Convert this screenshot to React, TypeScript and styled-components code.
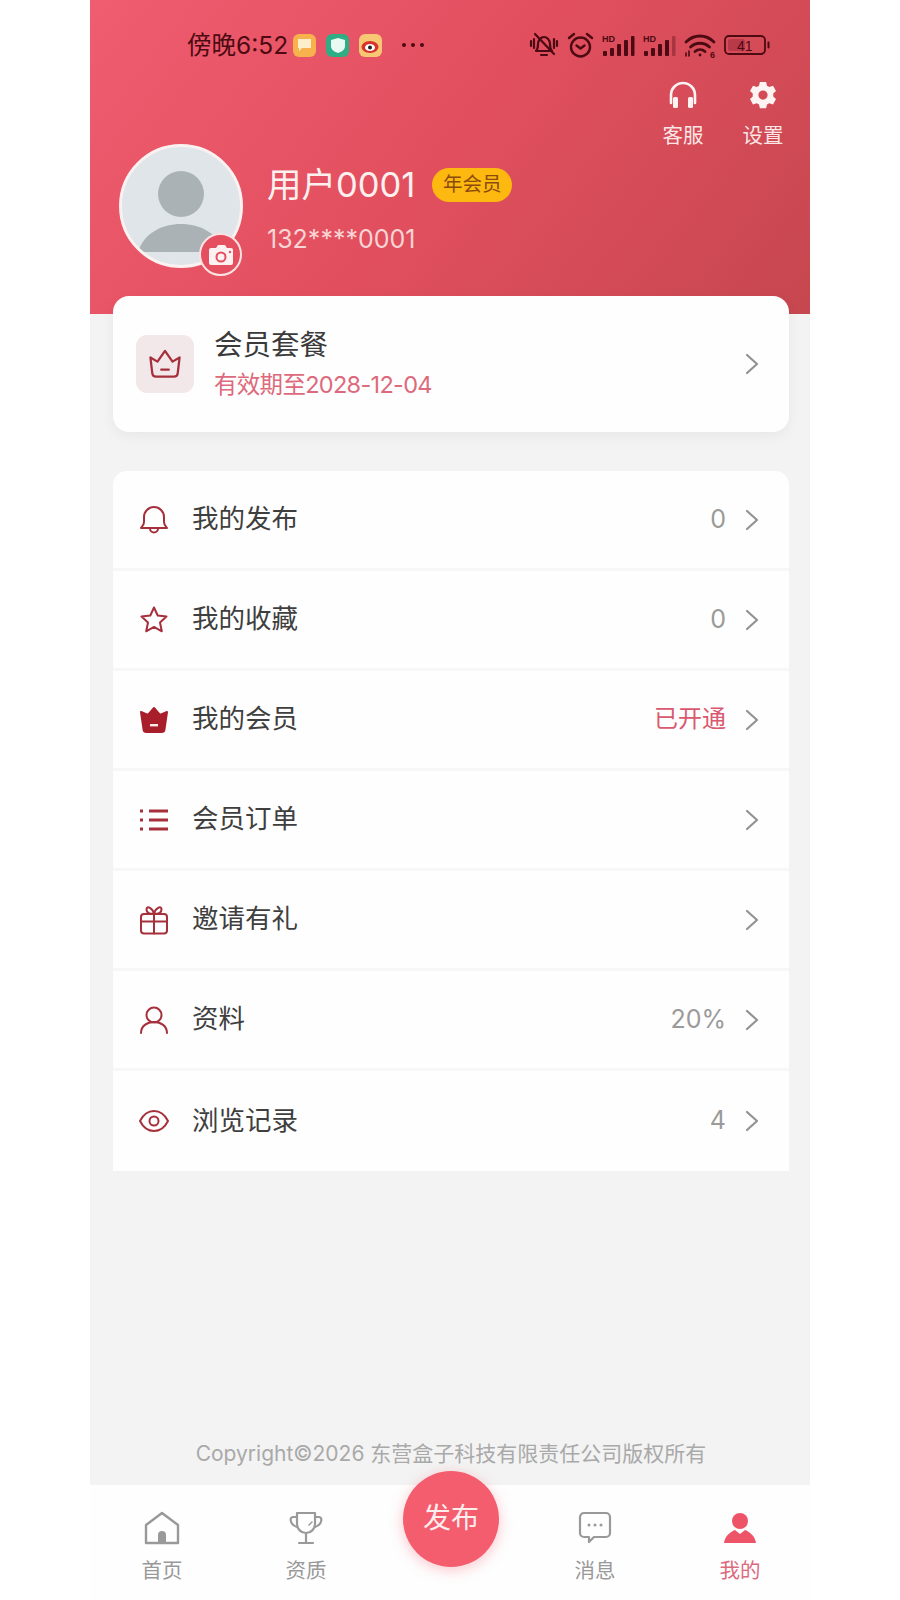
import styled, { createGlobalStyle } from "styled-components";
import { ReactNode } from "react";

const GlobalStyle = createGlobalStyle`
  html, body {
    margin: 0;
    padding: 0;
    background: #fff;
  }
  * {
    box-sizing: border-box;
  }
`;

const Page = styled.div`
  width: 720px;
  height: 1600px;
  margin: 0 auto;
  display: flex;
  flex-direction: column;
  background: #f3f3f3;
  font-family: Inter, "Noto Sans CJK SC", "Noto Sans", sans-serif;
  overflow: hidden;
`;

const Header = styled.header`
  height: 314px;
  flex: none;
  padding: 29px 26px 0 29px;
  background: linear-gradient(128deg, #f05c70 0%, #e14f5e 50%, #c6474f 100%);
`;

const StatusBar = styled.div`
  height: 32px;
  display: flex;
  align-items: center;
  justify-content: space-between;
  padding: 0 14px 0 68px;
`;

const StatusLeft = styled.div`
  display: flex;
  align-items: center;
`;

const Clock = styled.span`
  width: 100px;
  font-size: 24.5px;
  line-height: 32px;
  color: #4c0a12;
  white-space: nowrap;
  margin-right: 6px;
`;

const AppBadge = styled.span<{ $bg: string; $gap?: number }>`
  width: 23px;
  height: 23px;
  border-radius: 6px;
  background: ${(p) => p.$bg};
  margin-right: ${(p) => p.$gap ?? 10}px;
  display: flex;
  align-items: center;
  justify-content: center;
`;

const Dots = styled.span`
  display: flex;
  gap: 5px;
  margin-left: 20px;
  i {
    width: 4px;
    height: 4px;
    border-radius: 50%;
    background: #4c0a12;
  }
`;

const StatusRight = styled.div`
  display: flex;
  align-items: center;
  gap: 8px;
`;

const ToolRow = styled.div`
  display: flex;
  justify-content: flex-end;
  gap: 38px;
  margin-top: 19px;
`;

const Tool = styled.div`
  width: 42px;
  display: flex;
  flex-direction: column;
  align-items: center;
  color: #fbe6e6;
  font-size: 20.5px;
  line-height: 28px;
  gap: 12px;
`;

const ToolIcon = styled.span`
  height: 30px;
  display: flex;
  align-items: center;
  justify-content: center;
`;

const Profile = styled.div`
  display: flex;
  align-items: center;
  margin-top: -6px;
`;

const AvatarWrap = styled.div`
  position: relative;
  width: 124px;
  height: 124px;
  flex: none;
`;

const Avatar = styled.div`
  width: 124px;
  height: 124px;
  border-radius: 50%;
  border: 3px solid #fbf1f1;
  background: #dfe5e8;
  overflow: hidden;
`;

const CameraBadge = styled.div`
  position: absolute;
  right: 1px;
  bottom: -8px;
  width: 43px;
  height: 43px;
  border-radius: 50%;
  border: 2px solid #fbe3e3;
  background: #e4505f;
  display: flex;
  align-items: center;
  justify-content: center;
`;

const ProfileText = styled.div`
  margin-left: 24px;
  padding-top: 7px;
  display: flex;
  flex-direction: column;
  gap: 13px;
`;

const NameRow = styled.div`
  display: flex;
  align-items: center;
  gap: 17px;
`;

const Name = styled.span`
  font-size: 34.5px;
  line-height: 46px;
  color: #fdf1f0;
`;

const VipTag = styled.span`
  width: 80px;
  height: 34px;
  border-radius: 17px;
  background: #fdb90f;
  color: #8a4a10;
  font-size: 19.5px;
  line-height: 33px;
  text-align: center;
`;

const Phone = styled.span`
  font-size: 25px;
  line-height: 36px;
  color: #f9d5d5;
`;

const Content = styled.main`
  flex: 1;
  display: flex;
  flex-direction: column;
  padding: 0 21px 0 23px;
`;

const PlanCard = styled.div`
  height: 136px;
  margin-top: -18px;
  padding: 0 30px 0 23px;
  display: flex;
  align-items: center;
  background: #fefefe;
  border-radius: 16px;
  box-shadow: 0 4px 14px rgba(0, 0, 0, 0.05);
`;

const PlanIcon = styled.div`
  width: 58px;
  height: 58px;
  border-radius: 11px;
  background: #f3e8e9;
  display: flex;
  align-items: center;
  justify-content: center;
  flex: none;
`;

const PlanText = styled.div`
  margin-left: 20px;
  flex: 1;
  display: flex;
  flex-direction: column;
  gap: 3px;
  padding-bottom: 2px;
`;

const PlanTitle = styled.div`
  font-size: 28.5px;
  line-height: 40px;
  color: #3a3a3a;
`;

const PlanExpiry = styled.div`
  font-size: 23.5px;
  line-height: 34px;
  letter-spacing: -0.7px;
  color: #dd6a7c;
`;

const Menu = styled.section`
  margin-top: 39px;
  border-radius: 14px 14px 0 0;
  overflow: hidden;
  display: flex;
  flex-direction: column;
`;

const Row = styled.div`
  height: 100px;
  padding: 0 30px 0 25px;
  display: flex;
  align-items: center;
  background: #fefefe;
  border-bottom: 3px solid #f7f7f7;
  &:last-child {
    border-bottom: none;
  }
`;

const RowIcon = styled.span`
  width: 32px;
  height: 32px;
  flex: none;
  display: flex;
  align-items: center;
  justify-content: center;
`;

const RowLabel = styled.span`
  margin-left: 22px;
  flex: 1;
  font-size: 26.5px;
  line-height: 36px;
  padding-bottom: 3px;
  color: #3f3f3f;
`;

const RowValue = styled.span<{ $accent?: boolean }>`
  margin-right: 19px;
  font-size: ${(p) => (p.$accent ? 24 : 25)}px;
  line-height: 36px;
  padding-bottom: 2px;
  color: ${(p) => (p.$accent ? "#d9596f" : "#9a9a9a")};
`;

const Copyright = styled.div`
  margin-top: auto;
  text-align: center;
  font-size: 21px;
  line-height: 28px;
  color: #a9a9a9;
  padding-bottom: 17px;
`;

const Nav = styled.nav`
  position: relative;
  height: 115px;
  flex: none;
  display: grid;
  grid-template-columns: 144px 144px 142px 150px 140px;
  background: #fefefe;
`;

const NavItem = styled.div<{ $active?: boolean }>`
  display: flex;
  flex-direction: column;
  align-items: center;
  padding-top: 25px;
  gap: 11px;
  font-size: 20.5px;
  line-height: 28px;
  color: ${(p) => (p.$active ? "#dc6a7e" : "#999")};
`;

const NavIcon = styled.span`
  width: 36px;
  height: 36px;
  display: flex;
  align-items: center;
  justify-content: center;
`;

const Fab = styled.div`
  position: absolute;
  left: 313px;
  top: -14px;
  width: 96px;
  height: 96px;
  border-radius: 50%;
  background: #f45d6e;
  color: #fdeeee;
  font-size: 28px;
  line-height: 94px;
  text-align: center;
  box-shadow: 0 3px 14px rgba(244, 93, 110, 0.35);
`;

const DARK = "#4c0a12";
const MAROON = "#a5303c";

const Chevron = () => (
  <svg width="14" height="22" viewBox="0 0 14 22" fill="none">
    <path d="M2 2l10 9-10 9" stroke="#929292" strokeWidth="2.2" strokeLinecap="round" strokeLinejoin="round" />
  </svg>
);

const MuteIcon = () => (
  <svg width="30" height="26" viewBox="0 0 30 26" fill="none" stroke={DARK} strokeWidth="2.2" strokeLinecap="round" strokeLinejoin="round">
    <path d="M7 19c2-2 2-4 2-7 0-4 3-7 6-7s6 3 6 7c0 3 0 5 2 7z" />
    <path d="M6 2l19 20" />
    <path d="M12 23h6M2 9v5M5 7v9M28 9v5M25 7v9" />
  </svg>
);

const AlarmIcon = () => (
  <svg width="27" height="26" viewBox="0 0 27 26" fill="none" stroke={DARK} strokeWidth="2.4" strokeLinecap="round" strokeLinejoin="round">
    <circle cx="13.5" cy="15" r="9.5" />
    <path d="M9.5 13.5l4 3 4-3M2 6l5-4M25 6l-5-4" />
  </svg>
);

const SignalIcon = ({ weak }: { weak?: boolean }) => (
  <svg width="33" height="23" viewBox="0 0 33 23" fill={DARK}>
    <text x="0" y="8" fontSize="9" fontWeight="700" fontFamily="Liberation Sans, sans-serif">HD</text>
    <rect x="1" y="17" width="4" height="5" rx="1" />
    <rect x="8" y="14" width="4" height="8" rx="1" />
    <rect x="15" y="10" width="4" height="12" rx="1" />
    <rect x="22" y="6" width="4" height="16" rx="1" />
    <rect x="29" y="2" width="3.5" height="20" rx="1" opacity={weak ? 0.35 : 1} />
  </svg>
);

const WifiIcon = () => (
  <svg width="32" height="25" viewBox="0 0 32 25" fill="none" stroke={DARK} strokeWidth="2.8" strokeLinecap="round">
    <path d="M2 9c8-8 20-8 28 0M6.5 14c5.500-5 13.500-5 19 0M11 18.500c3-2.500 7-2.500 10 0" />
    <circle cx="16" cy="22" r="1.400" fill={DARK} stroke="none" />
    <text x="26" y="24.500" fontSize="9" fontWeight="700" fill={DARK} stroke="none" fontFamily="Liberation Sans, sans-serif">6</text>
    <path d="M2 20v3M5 18v5" strokeWidth="1.600" />
  </svg>
);

const BatteryIcon = () => (
  <svg width="46" height="20" viewBox="0 0 46 20" fill="none">
    <rect x="1" y="1" width="40" height="18" rx="4" stroke={DARK} strokeWidth="1.800" />
    <rect x="4" y="4" width="17" height="12" rx="2" fill="#b8394a" />
    <text x="13" y="15.500" fontSize="14" fill={DARK} fontFamily="Liberation Sans, sans-serif">41</text>
    <rect x="43.500" y="6.500" width="2" height="7" rx="1" fill={DARK} />
  </svg>
);

const Headset = () => (
  <svg width="30" height="28" viewBox="0 0 30 28" fill="none">
    <path d="M3 22V14a12 12 0 0124 0v8" stroke="#fdf3f3" strokeWidth="2.600" strokeLinecap="round" />
    <rect x="5" y="16" width="5" height="11" rx="1.500" fill="#fdf3f3" />
    <rect x="20" y="16" width="5" height="11" rx="1.500" fill="#fdf3f3" />
  </svg>
);

const Gear = () => (
  <svg width="30" height="30" viewBox="0 0 24 24">
    <path
      fill="#fdf3f3"
      fillRule="evenodd"
      d="M9.500 1.500h5l.7 3 1.800 1 3-1 2.400 4.300-2.200 2v2.400l2.200 2-2.400 4.300-3-1-1.800 1-.7 3h-5l-.7-3-1.800-1-3 1-2.400-4.300 2.200-2v-2.400l-2.200-2 2.400-4.300 3 1 1.800-1zM12 8.300a3.700 3.700 0 100 7.400 3.700 3.700 0 000-7.400z"
    />
  </svg>
);

const AvatarArt = () => (
  <svg width="118" height="118" viewBox="0 0 118 118">
    <circle cx="59" cy="47" r="23" fill="#abb2b5" />
    <path d="M16 105c6-19 24-28 43-28s37 9 43 28z" fill="#abb2b5" />
  </svg>
);

const Camera = () => (
  <svg width="26" height="22" viewBox="0 0 26 22">
    <path
      fill="#fdf1f1"
      fillRule="evenodd"
      d="M3 4h5l2-3h7l2 3h4a2 2 0 012 2v13a2 2 0 01-2 2H3a2 2 0 01-2-2V6a2 2 0 012-2zm10 3.500a5.500 5.500 0 100 11 5.500 5.500 0 000-11zm0 2a3.500 3.500 0 110 7 3.500 3.500 0 010-7z"
    />
    <circle cx="22" cy="8" r="1.200" fill="#e4505f" />
  </svg>
);

const CrownOutline = ({ size, color }: { size: number; color: string }) => (
  <svg width={size} height={size} viewBox="0 0 34 32" fill="none" stroke={color} strokeWidth="2.400" strokeLinejoin="round" strokeLinecap="round">
    <path d="M1.500 9l7.500 4.500L17 2l8 11.500L32.500 9l-2 17a4 4 0 01-4 3.500h-19a4 4 0 01-4-3.500z" />
    <path d="M13 22h8" />
  </svg>
);

const CrownSolid = () => (
  <svg width="30" height="28" viewBox="0 0 30 28">
    <path
      fill="#a81f2b"
      stroke="#a81f2b"
      strokeWidth="2"
      strokeLinejoin="round"
      d="M15 2l6 7 7-3-2.500 17a3 3 0 01-3 3h-15a3 3 0 01-3-3L2 6l7 3z"
    />
    <rect x="11" y="18" width="8" height="2.400" fill="#fbe8e8" />
  </svg>
);

const IconSvg = ({ children, w = 30, h = 30, vb = "0 0 30 30" }: { children: ReactNode; w?: number; h?: number; vb?: string }) => (
  <svg width={w} height={h} viewBox={vb} fill="none" stroke={MAROON} strokeWidth="2" strokeLinecap="round" strokeLinejoin="round">
    {children}
  </svg>
);

const menuItems: { label: string; value?: string; accent?: boolean; icon: ReactNode }[] = [
  {
    label: "我的发布",
    value: "0",
    icon: (
      <IconSvg>
        <path d="M2 23c0-1 3-2 3-6v-5a10 10 0 0120 0v5c0 4 3 5 3 6z" />
        <path d="M11 23.500a4 4 0 008 0" />
      </IconSvg>
    ),
  },
  {
    label: "我的收藏",
    value: "0",
    icon: (
      <IconSvg>
        <path d="M15 2.500l3.700 8 8.800 1-6.500 6 1.800 8.800L15 21.900 7.200 26.300 9 17.500l-6.500-6 8.800-1z" />
      </IconSvg>
    ),
  },
  { label: "我的会员", value: "已开通", accent: true, icon: <CrownSolid /> },
  {
    label: "会员订单",
    icon: (
      <IconSvg>
        <path d="M1 6h3M10 6h19M1 15h3M10 15h19M1 24h3M10 24h19" strokeWidth="3" strokeLinecap="butt" />
      </IconSvg>
    ),
  },
  {
    label: "邀请有礼",
    icon: (
      <IconSvg>
        <rect x="2" y="9" width="26" height="19.500" rx="3" />
        <path d="M2 16.500h26M15 9v19.500M15 9C14 3 7.500 0 7.500 4.500 7.500 7.500 11 9 15 9zM15 9c1-6 7.500-9 7.500-4.500C22.500 7.500 19 9 15 9z" />
      </IconSvg>
    ),
  },
  {
    label: "资料",
    value: "20%",
    icon: (
      <IconSvg>
        <circle cx="15" cy="10" r="7.500" />
        <path d="M2 28c0-7 6-11 13-11s13 4 13 11" />
      </IconSvg>
    ),
  },
  {
    label: "浏览记录",
    value: "4",
    icon: (
      <IconSvg>
        <path d="M1 15c3-6 8-10 14-10s11 4 14 10c-3 6-8 10-14 10S4 21 1 15z" />
        <circle cx="15" cy="15" r="4.500" />
      </IconSvg>
    ),
  },
];

const HomeIcon = () => (
  <svg width="36" height="34" viewBox="0 0 36 34" fill="none">
    <path d="M2 32V14L18 2l16 12v18z" stroke="#999" strokeWidth="2.400" strokeLinejoin="round" />
    <path d="M14 32V24a4 4 0 018 0v8z" fill="#999" />
  </svg>
);

const TrophyIcon = () => (
  <svg width="34" height="34" viewBox="0 0 34 34" fill="none" stroke="#999" strokeWidth="2.200" strokeLinecap="round" strokeLinejoin="round">
    <path d="M8 2h18v11a9 9 0 01-18 0z" />
    <path d="M8 6H4C0 6 1 14 8 16M26 6h4c4 0 3 8-4 10M17 22v10M10 32h14" />
    <path d="M20 14l3-3" strokeWidth="1.500" />
  </svg>
);

const ChatIcon = () => (
  <svg width="34" height="34" viewBox="0 0 34 34" fill="none">
    <path d="M6 2h22a4 4 0 014 4v16a4 4 0 01-4 4H16l-5 5v-5H6a4 4 0 01-4-4V6a4 4 0 014-4z" stroke="#999" strokeWidth="2.200" strokeLinejoin="round" />
    <circle cx="11" cy="14" r="1.500" fill="#999" />
    <circle cx="17" cy="14" r="1.500" fill="#999" />
    <circle cx="23" cy="14" r="1.500" fill="#999" />
  </svg>
);

const MeIcon = () => (
  <svg width="32" height="32" viewBox="0 0 32 32" fill="#ee5468">
    <circle cx="16" cy="9" r="8" />
    <path d="M0 31c1-7 6-11 11-13l5 4 5-4c5 2 10 6 11 13z" />
  </svg>
);

const App = () => {
  return (
    <Page>
      <GlobalStyle />
      <Header>
        <StatusBar>
          <StatusLeft>
            <Clock>傍晚6:52</Clock>
            <AppBadge $bg="#f7b24e">
              <svg width="13" height="12" viewBox="0 0 13 12">
                <path d="M0 0h13v9H4l-3 3V9H0z" fill="#fdeecb" />
              </svg>
            </AppBadge>
            <AppBadge $bg="#2fae86">
              <svg width="14" height="15" viewBox="0 0 14 15">
                <path d="M7 0l7 2v6c0 4-4 6-7 7-3-1-7-3-7-7V2z" fill="#e8faf3" />
              </svg>
            </AppBadge>
            <AppBadge $bg="#f8c774" $gap={0}>
              <svg width="19" height="15" viewBox="0 0 19 15">
                <ellipse cx="9" cy="9" rx="8.500" ry="6" fill="#d9312c" />
                <ellipse cx="9" cy="9.500" rx="5" ry="3.600" fill="#fff" />
                <circle cx="9" cy="9.500" r="2" fill="#222" />
              </svg>
            </AppBadge>
            <Dots>
              <i />
              <i />
              <i />
            </Dots>
          </StatusLeft>
          <StatusRight>
            <MuteIcon />
            <AlarmIcon />
            <SignalIcon />
            <SignalIcon weak />
            <WifiIcon />
            <BatteryIcon />
          </StatusRight>
        </StatusBar>
        <ToolRow>
          <Tool>
            <ToolIcon>
              <Headset />
            </ToolIcon>
            客服
          </Tool>
          <Tool>
            <ToolIcon>
              <Gear />
            </ToolIcon>
            设置
          </Tool>
        </ToolRow>
        <Profile>
          <AvatarWrap>
            <Avatar>
              <AvatarArt />
            </Avatar>
            <CameraBadge>
              <Camera />
            </CameraBadge>
          </AvatarWrap>
          <ProfileText>
            <NameRow>
              <Name>用户0001</Name>
              <VipTag>年会员</VipTag>
            </NameRow>
            <Phone>132****0001</Phone>
          </ProfileText>
        </Profile>
      </Header>
      <Content>
        <PlanCard>
          <PlanIcon>
            <CrownOutline size={32} color={MAROON} />
          </PlanIcon>
          <PlanText>
            <PlanTitle>会员套餐</PlanTitle>
            <PlanExpiry>有效期至2028-12-04</PlanExpiry>
          </PlanText>
          <Chevron />
        </PlanCard>
        <Menu>
          {menuItems.map((item) => (
            <Row key={item.label}>
              <RowIcon>{item.icon}</RowIcon>
              <RowLabel>{item.label}</RowLabel>
              {item.value && <RowValue $accent={item.accent}>{item.value}</RowValue>}
              <Chevron />
            </Row>
          ))}
        </Menu>
        <Copyright>Copyright©2026 东营盒子科技有限责任公司版权所有</Copyright>
      </Content>
      <Nav>
        <NavItem>
          <NavIcon>
            <HomeIcon />
          </NavIcon>
          首页
        </NavItem>
        <NavItem>
          <NavIcon>
            <TrophyIcon />
          </NavIcon>
          资质
        </NavItem>
        <div />
        <NavItem>
          <NavIcon>
            <ChatIcon />
          </NavIcon>
          消息
        </NavItem>
        <NavItem $active>
          <NavIcon>
            <MeIcon />
          </NavIcon>
          我的
        </NavItem>
        <Fab>发布</Fab>
      </Nav>
    </Page>
  );
};

export default App;
